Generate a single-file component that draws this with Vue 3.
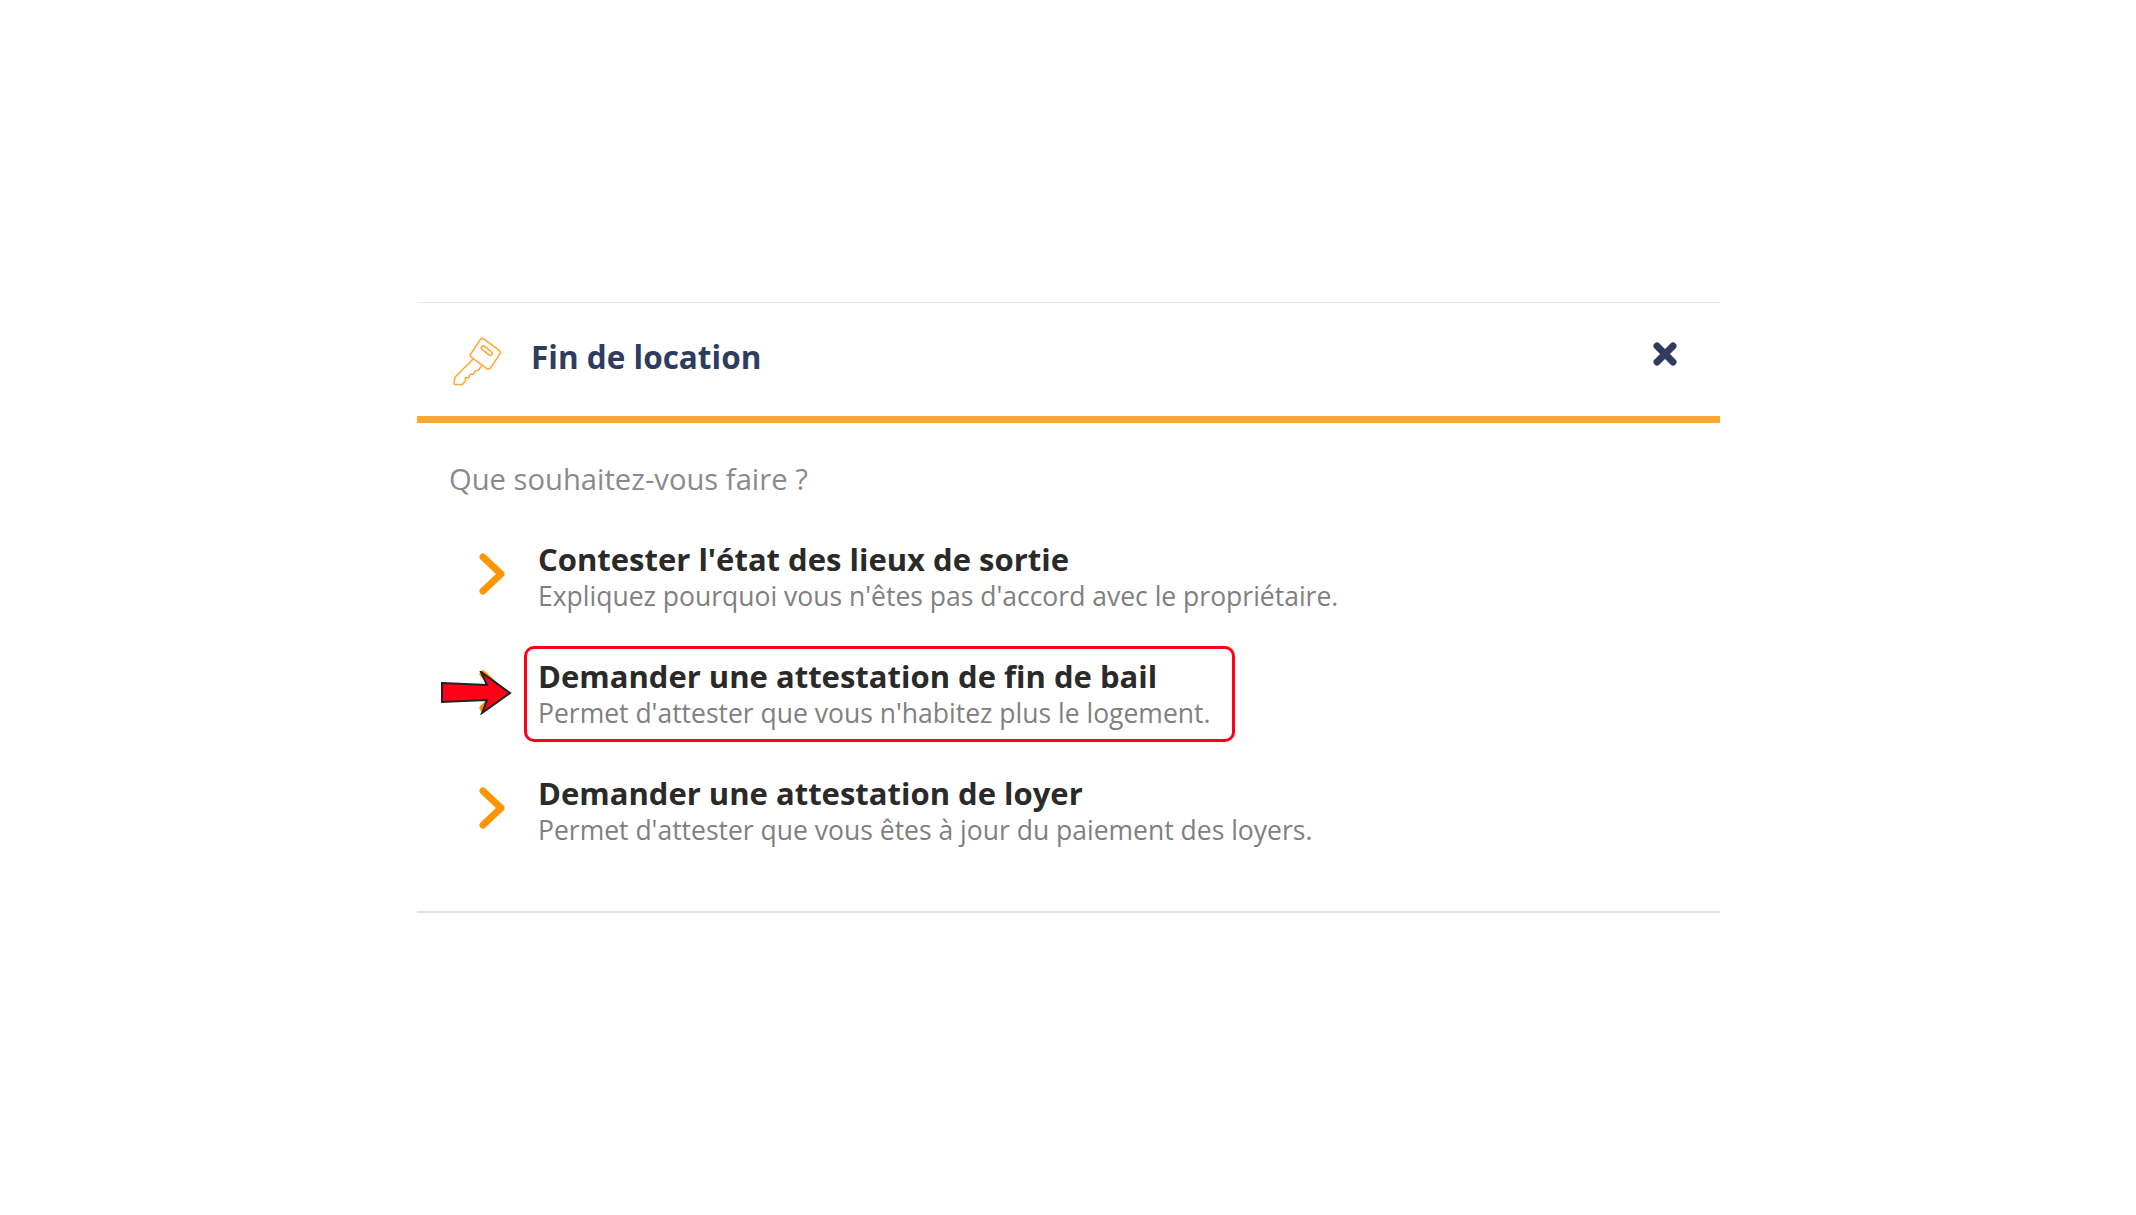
<script setup>
const items = [
  { title: "Contester l'état des lieux de sortie", text: "Expliquez pourquoi vous n'êtes pas d'accord avec le propriétaire." },
  { title: 'Demander une attestation de fin de bail', text: "Permet d'attester que vous n'habitez plus le logement.", marked: true },
  { title: 'Demander une attestation de loyer', text: "Permet d'attester que vous êtes à jour du paiement des loyers." }
]
</script>

<template>
  <div class="page">
    <div class="modal">
      <div class="modal-header">
        <svg class="key" viewBox="0 0 50 50" fill="none" stroke="#ffa733" stroke-width="1.6" stroke-linejoin="round">
          <path d="M30.5 1.5 L47.5 14 Q49 15.5 48 17 L38 32 Q36.5 33.5 35 32.5 L18.5 20.5 Q17 19 18 17.5 L28 2.5 Q29 1 30.5 1.5 Z" />
          <rect x="-6.5" y="-2" width="13" height="4" rx="2" transform="translate(34.5 14) rotate(38)" />
          <path d="M20.5 22.5 L2 41 L1 47.5 Q1 48.5 2 48.5 L9.5 48.5 L13 44.5 L12.5 41.5 L16 41.5 L17.5 38 L21 38 L22.5 34.5 L26 34 L29.5 29" />
        </svg>
        <h2>Fin de location</h2>
        <svg class="close" viewBox="0 0 24 24" stroke="#2e3d5f" stroke-width="7" stroke-linecap="round">
          <path d="M4 4 L20 20 M20 4 L4 20" />
        </svg>
      </div>
      <div class="modal-body">
        <p class="question">Que souhaitez-vous faire ?</p>
        <div v-for="item in items" :key="item.title" class="choice">
          <svg class="chevron" viewBox="0 0 26 42" fill="none" stroke="#ff9500" stroke-width="7" stroke-linecap="round" stroke-linejoin="round">
            <path d="M4 4 L22 21 L4 38" />
          </svg>
          <div class="choice-text">
            <div class="choice-title">{{ item.title }}</div>
            <div class="choice-sub">{{ item.text }}</div>
          </div>
          <template v-if="item.marked">
            <div class="red-box"></div>
            <svg class="red-arrow" viewBox="0 0 72 44">
              <path d="M1 12 L46 14 L40 1 L69 22 L41 42 L46 29 L1 31 Z" fill="#ff0018" stroke="#222" stroke-width="2" stroke-linejoin="miter" />
            </svg>
          </template>
        </div>
      </div>
    </div>
  </div>
</template>

<style scoped>
.page {
  height: 1215px;
  background: #fff;
  padding-top: 302px;
  box-sizing: border-box;
  font-family: "Open Sans", sans-serif;
}

.modal {
  width: 1303px;
  margin-left: 417px;
  border-top: 1px solid #e8e8e8;
  border-bottom: 2px solid #e4e4e4;
  height: 611px;
  box-sizing: border-box;
}

.modal-header {
  display: flex;
  align-items: center;
  height: 113px;
  padding: 0 43px 0 36px;
  border-bottom: 7px solid #ffa733;
  box-sizing: content-box;
}

.key {
  width: 49px;
  height: 49px;
  margin-top: 3px;
}

h2 {
  margin: 0 0 6px 29px;
  font-size: 31.5px;
  font-weight: 700;
  color: #2e3d5f;
  flex: 1;
}

.close {
  width: 24px;
  height: 24px;
  margin-bottom: 11px;
}

.modal-body {
  padding: 0 32px;
}

.question {
  margin: 0 0 18px;
  padding-top: 36px;
  font-size: 29.2px;
  line-height: 40px;
  color: #8a8a8a;
}

.choice {
  position: relative;
  display: flex;
  align-items: center;
  height: 117px;
  padding-left: 30px;
}

.chevron {
  width: 26px;
  height: 42px;
  margin-right: 33px;
  margin-bottom: 4px;
}

.choice-title {
  font-size: 31px;
  line-height: 40px;
  font-weight: 700;
  color: #2a2a2a;
}

.choice-sub {
  font-size: 26.5px;
  line-height: 34px;
  color: #808080;
}

.red-box {
  position: absolute;
  left: 75px;
  top: 12px;
  width: 711px;
  height: 96px;
  border: 3px solid #ff0018;
  border-radius: 10px;
  box-sizing: border-box;
}

.red-arrow {
  position: absolute;
  left: -8px;
  top: 37px;
  width: 72px;
  height: 44px;
}
</style>
